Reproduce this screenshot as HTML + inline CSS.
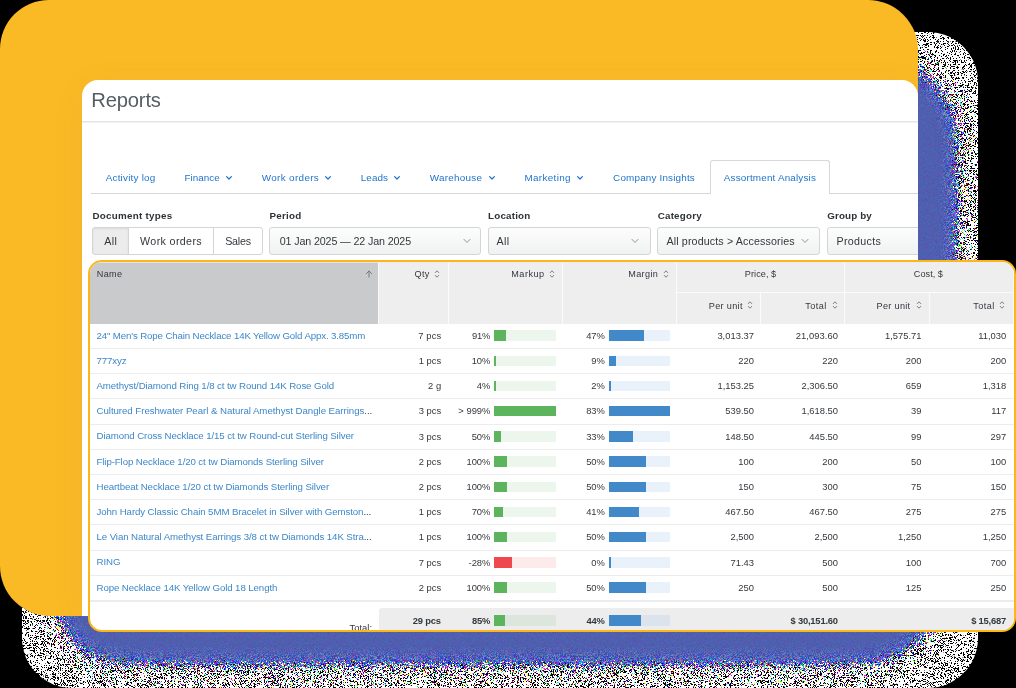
<!DOCTYPE html>
<html><head><meta charset="utf-8"><title>Reports</title>
<style>
html,body{margin:0;padding:0;background:#000;width:1016px;height:688px;overflow:hidden;font-family:"Liberation Sans",sans-serif}
div,span,svg{position:absolute;box-sizing:border-box}
#bg{left:0;top:0}
#yellow{left:0;top:0;width:918px;height:616px;background:#FABA25;border-radius:49px 50px 0 50px}
#white{box-shadow:0 6px 36px rgba(70,90,170,.05);left:82px;top:80px;width:836px;height:536px;background:#fff;border-radius:16px 16px 0 0;overflow:hidden;will-change:transform}
#tcard{left:88px;top:260px;width:928px;height:372px;border:2px solid #FDB714;border-radius:14px;background:#fff;overflow:hidden;will-change:transform}
.t{white-space:nowrap;line-height:20px;height:20px}
.t i{font-style:normal;color:#33383d}
.t b{font-weight:inherit;white-space:nowrap}
.ic{overflow:visible}
.hr{left:0;width:836px;height:1px}
.sel{top:147.1px;height:28.2px;border:1px solid #d3d5d6;border-radius:3px;background:linear-gradient(#fdfdfd,#f0f1f1)}
.bg{top:147.1px;height:28.2px;border:1px solid #d3d5d6;background:#fff}
.hd{background:#eeeeee}
.sep{left:0;width:924px;height:1px;background:#ececec}
.bar{height:10.6px}
</style></head><body>
<svg id="bg" width="1016" height="688" viewBox="0 0 1016 688">
<defs>
<filter id="fbw" x="0" y="0" width="100%" height="100%" color-interpolation-filters="sRGB">
<feTurbulence type="fractalNoise" baseFrequency="2.3" numOctaves="1" seed="7" result="n"/>
<feColorMatrix in="n" type="matrix" values="0 0 0 0 0 0 0 0 0 0 0 0 0 0 0 -60 0 0 0 26.9" result="th"/>
<feFlood flood-color="#000"/><feComposite in2="th" operator="in" result="blk"/>
<feComposite in="blk" in2="SourceGraphic" operator="atop"/>
</filter>
<filter id="fbl" filterUnits="userSpaceOnUse" x="0" y="0" width="1016" height="688" color-interpolation-filters="sRGB">
<feGaussianBlur in="SourceAlpha" stdDeviation="7" result="bl"/>
<feGaussianBlur in="SourceAlpha" stdDeviation="14" result="bl2"/>
<feTurbulence type="fractalNoise" baseFrequency="3.1" numOctaves="1" seed="23" result="n2"/>
<feTurbulence type="fractalNoise" baseFrequency="2.7" numOctaves="1" seed="51" result="n3"/>
<feColorMatrix in="n2" type="matrix" values="0 0 0 0 0 0 0 0 0 0 0 0 0 0 0 0 3 0 0 -1" result="na"/>
<feComposite in="bl" in2="na" operator="arithmetic" k1="0" k2="1.6" k3="1" k4="-1.3" result="sum"/>
<feColorMatrix in="sum" type="matrix" values="0 0 0 0 0 0 0 0 0 0 0 0 0 0 0 0 0 0 400 0" result="mask"/>
<feColorMatrix in="n2" type="matrix" values="0.3 0 0 0 0.165  -0.25 0 0.1 0 0.45  0 0 0.2 0 0.59  0 0 0 0 1" result="flat"/>
<feColorMatrix in="n3" type="matrix" values="3 0 0 0 -1.17 0 3 0 0 -1.11 0 0 3 0 -0.78 0 0 0 0 1" result="c3"/>
<feComponentTransfer in="c3" result="q3"><feFuncR type="discrete" tableValues="0.08 0.5 0.9"/><feFuncG type="discrete" tableValues="0.1 0.5 0.9"/><feFuncB type="discrete" tableValues="0.3 0.55 1"/></feComponentTransfer>
<feColorMatrix in="bl2" type="matrix" values="0 0 0 0 0 0 0 0 0 0 0 0 0 0 0 0 0 0 -1.9 1.8" result="w"/>
<feComposite in="q3" in2="w" operator="in" result="q3w"/>
<feMerge result="colmix"><feMergeNode in="flat"/><feMergeNode in="q3w"/></feMerge>
<feComposite in="colmix" in2="mask" operator="in" result="blue"/>
<feColorMatrix in="n3" type="matrix" values="0 0 0 0 0 0 0 0 0 0 0 0 0 0 0 0 0 0 3 -1" result="n3a"/>
<feComposite in="bl2" in2="n3a" operator="arithmetic" k1="0" k2="1" k3="1" k4="-1.05" result="ss"/>
<feColorMatrix in="ss" type="matrix" values="0 0 0 0 0 0 0 0 0 0 0 0 0 0 0 0 0 0 400 0" result="smask"/>
<feColorMatrix in="n3" type="matrix" values="1 0 0 0 0 0 1 0 0 0 0 0 1 0 0 0 0 0 0 1" result="n3o"/>
<feComponentTransfer in="n3o" result="prim"><feFuncR type="discrete" tableValues="0 1"/><feFuncG type="discrete" tableValues="0 1"/><feFuncB type="discrete" tableValues="0 1"/></feComponentTransfer>
<feComposite in="prim" in2="smask" operator="in" result="speck"/>
<feMerge><feMergeNode in="speck"/><feMergeNode in="blue"/></feMerge>
</filter>
<clipPath id="cp"><rect x="22" y="32" width="956" height="656" rx="50" ry="50"/></clipPath>
</defs>
<rect x="22" y="32" width="956" height="656" rx="50" ry="50" fill="#fff" filter="url(#fbw)"/>
<g clip-path="url(#cp)"><g filter="url(#fbl)"><path d="M70.0 58.0 L500.0 54.0 L880.0 56.0 L905.0 60.0 L918.0 67.0 L933.0 82.0 L946.0 98.0 L954.0 112.0 L957.5 128.0 L958.0 150.0 L958.0 200.0 L957.5 240.0 L957.5 560.0 L955.0 595.0 L948.0 612.0 L939.0 623.0 L927.3 632.0 L915.0 645.6 L901.0 655.0 L887.0 660.7 L866.7 664.0 L846.0 665.5 L700.0 665.8 L400.0 665.8 L200.0 666.3 L140.0 664.7 L110.0 662.7 L97.2 659.2 L85.6 654.5 L75.1 645.2 L68.1 634.7 L58.8 619.6 L52.0 600.0 L50.0 560.0 L50.0 100.0 Z" fill="#000"/></g></g>
</svg>
<div id="yellow"></div>
<div id="white">
<div class="hr" style="top:41px;background:#e3e5e6"></div><div class="hr" style="top:42px;background:#f1f2f2"></div>
<div class="hr" style="left:9px;top:113px;background:#d5d7d8"></div>
<div style="left:627.6px;top:80.4px;width:120px;height:34px;border:1px solid #d5d7d8;border-bottom:none;border-radius:3px 3px 0 0;background:#fff"></div>
<svg class="ic" style="left:142.00px;top:93.50px" width="10" height="8" viewBox="0 0 10 8"><path d="M2.6 2.6 L5 5.0 L7.4 2.6" fill="none" stroke="#1f74ca" stroke-width="1.25" stroke-linecap="round" stroke-linejoin="round"/></svg><svg class="ic" style="left:241.30px;top:93.50px" width="10" height="8" viewBox="0 0 10 8"><path d="M2.6 2.6 L5 5.0 L7.4 2.6" fill="none" stroke="#1f74ca" stroke-width="1.25" stroke-linecap="round" stroke-linejoin="round"/></svg><svg class="ic" style="left:309.90px;top:93.50px" width="10" height="8" viewBox="0 0 10 8"><path d="M2.6 2.6 L5 5.0 L7.4 2.6" fill="none" stroke="#1f74ca" stroke-width="1.25" stroke-linecap="round" stroke-linejoin="round"/></svg><svg class="ic" style="left:404.60px;top:93.50px" width="10" height="8" viewBox="0 0 10 8"><path d="M2.6 2.6 L5 5.0 L7.4 2.6" fill="none" stroke="#1f74ca" stroke-width="1.25" stroke-linecap="round" stroke-linejoin="round"/></svg><svg class="ic" style="left:493.30px;top:93.50px" width="10" height="8" viewBox="0 0 10 8"><path d="M2.6 2.6 L5 5.0 L7.4 2.6" fill="none" stroke="#1f74ca" stroke-width="1.25" stroke-linecap="round" stroke-linejoin="round"/></svg><div class="bg" style="left:10.3px;width:36.7px;border-radius:3px 0 0 3px;background:#ececec;box-shadow:inset 0 1px 2px rgba(0,0,0,.08)"></div><div class="bg" style="left:46px;width:85.8px;border-left:1px solid #d3d5d6"></div><div class="bg" style="left:130.8px;width:49.8px;border-radius:0 3px 3px 0"></div>
<div class="sel" style="left:187.3px;width:211.5px"></div><svg class="ic" style="left:380.30px;top:156.90px" width="10" height="8" viewBox="0 0 10 8"><path d="M2.0 2.4 L5 5.4 L8.0 2.4" fill="none" stroke="#898c8f" stroke-width="0.95" stroke-linecap="round" stroke-linejoin="round"/></svg><div class="sel" style="left:405.8px;width:162.9px"></div><svg class="ic" style="left:548.30px;top:156.90px" width="10" height="8" viewBox="0 0 10 8"><path d="M2.0 2.4 L5 5.4 L8.0 2.4" fill="none" stroke="#898c8f" stroke-width="0.95" stroke-linecap="round" stroke-linejoin="round"/></svg><div class="sel" style="left:575.4px;width:163.0px"></div><svg class="ic" style="left:718.20px;top:156.90px" width="10" height="8" viewBox="0 0 10 8"><path d="M2.0 2.4 L5 5.4 L8.0 2.4" fill="none" stroke="#898c8f" stroke-width="0.95" stroke-linecap="round" stroke-linejoin="round"/></svg><div class="sel" style="left:745.0px;width:133.0px"></div>
<span class="t" id="title" style="top:9.70px;font-size:20.20px;color:#555e65;letter-spacing:-0.181px;left:9.30px;">Reports</span>
<span class="t" id="tab0" style="top:87.77px;font-size:9.90px;color:#1f74ca;letter-spacing:0.216px;left:23.70px;">Activity log</span>
<span class="t" id="tab1" style="top:87.77px;font-size:9.90px;color:#1f74ca;letter-spacing:0.036px;left:102.40px;">Finance</span>
<span class="t" id="tab2" style="top:87.77px;font-size:9.90px;color:#1f74ca;letter-spacing:0.353px;left:179.70px;">Work orders</span>
<span class="t" id="tab3" style="top:87.77px;font-size:9.90px;color:#1f74ca;letter-spacing:0.077px;left:278.80px;">Leads</span>
<span class="t" id="tab4" style="top:87.77px;font-size:9.90px;color:#1f74ca;letter-spacing:0.261px;left:347.70px;">Warehouse</span>
<span class="t" id="tab5" style="top:87.77px;font-size:9.90px;color:#1f74ca;letter-spacing:0.348px;left:442.40px;">Marketing</span>
<span class="t" id="tab6" style="top:87.77px;font-size:9.90px;color:#1f74ca;letter-spacing:0.178px;left:531.10px;">Company Insights</span>
<span class="t" id="tab7" style="top:87.77px;font-size:9.90px;color:#1f74ca;letter-spacing:0.177px;left:641.80px;">Assortment Analysis</span>
<span class="t" id="lab0" style="top:126.40px;font-size:9.80px;color:#2d3236;font-weight:700;letter-spacing:0.269px;left:10.50px;">Document types</span>
<span class="t" id="lab1" style="top:126.40px;font-size:9.80px;color:#2d3236;font-weight:700;letter-spacing:0.264px;left:187.40px;">Period</span>
<span class="t" id="lab2" style="top:126.40px;font-size:9.80px;color:#2d3236;font-weight:700;letter-spacing:0.207px;left:406.00px;">Location</span>
<span class="t" id="lab3" style="top:126.40px;font-size:9.80px;color:#2d3236;font-weight:700;letter-spacing:0.214px;left:575.70px;">Category</span>
<span class="t" id="lab4" style="top:126.40px;font-size:9.80px;color:#2d3236;font-weight:700;letter-spacing:0.142px;left:745.20px;">Group by</span>
<span class="t" id="b0" style="top:150.79px;font-size:10.70px;color:#33383d;letter-spacing:0.291px;left:22.30px;">All</span>
<span class="t" id="b1" style="top:150.79px;font-size:10.70px;color:#33383d;letter-spacing:0.359px;left:58.10px;">Work orders</span>
<span class="t" id="b2" style="top:150.79px;font-size:10.70px;color:#33383d;letter-spacing:-0.197px;left:143.20px;">Sales</span>
<span class="t" id="s0" style="top:150.79px;font-size:10.70px;color:#33383d;letter-spacing:-0.125px;left:197.80px;">01 Jan 2025 — 22 Jan 2025</span>
<span class="t" id="s1" style="top:150.79px;font-size:10.70px;color:#33383d;letter-spacing:0.357px;left:414.50px;">All</span>
<span class="t" id="s2" style="top:150.79px;font-size:10.70px;color:#33383d;letter-spacing:0.124px;left:584.50px;">All products &gt; Accessories</span>
<span class="t" id="s3" style="top:150.79px;font-size:10.70px;color:#33383d;letter-spacing:0.284px;left:754.60px;">Products</span>
</div>
<div id="tcard">
<div style="left:0.0px;top:0.0px;width:924.0px;height:61.7px;background:#eeeeee;"></div><div style="left:0.0px;top:0.0px;width:288.4px;height:61.7px;background:#c9cacc;"></div><div style="left:288.4px;top:0.0px;width:1.0px;height:61.7px;background:#fbfbfb;"></div><div style="left:357.6px;top:0.0px;width:1.0px;height:61.7px;background:#fbfbfb;"></div><div style="left:472.1px;top:0.0px;width:1.0px;height:61.7px;background:#fbfbfb;"></div><div style="left:586.3px;top:0.0px;width:1.0px;height:61.7px;background:#fbfbfb;"></div><div style="left:754.4px;top:0.0px;width:1.0px;height:61.7px;background:#fbfbfb;"></div><div style="left:670.3px;top:30.3px;width:1.0px;height:31.4px;background:#fbfbfb;"></div><div style="left:838.5px;top:30.3px;width:1.0px;height:31.4px;background:#fbfbfb;"></div><div style="left:586.3px;top:29.8px;width:337.7px;height:1.0px;background:#fbfbfb;"></div><div style="left:0.0px;top:0.0px;width:924.0px;height:1.0px;background:rgba(228,236,252,.75);"></div><div style="left:922.6px;top:0.0px;width:1.4px;height:61.7px;background:#f9f9fb;"></div>
<svg class="ic" style="left:273.50px;top:6.90px" width="10" height="10" viewBox="0 0 10 10"><path d="M5 8.2 L5 2.0 M2.3 4.7 L5 2.0 L7.7 4.7" fill="none" stroke="#6f7376" stroke-width="0.9" stroke-linecap="round" stroke-linejoin="round"/></svg><svg class="ic" style="left:343.40px;top:6.60px" width="8" height="10" viewBox="0 0 8 10"><path d="M2.3 3.6 L4 1.8 L5.7 3.6 M2.3 6.4 L4 8.2 L5.7 6.4" fill="none" stroke="#66696c" stroke-width="0.85" stroke-linecap="round" stroke-linejoin="round"/></svg><svg class="ic" style="left:457.80px;top:6.60px" width="8" height="10" viewBox="0 0 8 10"><path d="M2.3 3.6 L4 1.8 L5.7 3.6 M2.3 6.4 L4 8.2 L5.7 6.4" fill="none" stroke="#66696c" stroke-width="0.85" stroke-linecap="round" stroke-linejoin="round"/></svg><svg class="ic" style="left:571.90px;top:6.60px" width="8" height="10" viewBox="0 0 8 10"><path d="M2.3 3.6 L4 1.8 L5.7 3.6 M2.3 6.4 L4 8.2 L5.7 6.4" fill="none" stroke="#66696c" stroke-width="0.85" stroke-linecap="round" stroke-linejoin="round"/></svg><svg class="ic" style="left:656.40px;top:38.40px" width="8" height="10" viewBox="0 0 8 10"><path d="M2.3 3.6 L4 1.8 L5.7 3.6 M2.3 6.4 L4 8.2 L5.7 6.4" fill="none" stroke="#66696c" stroke-width="0.85" stroke-linecap="round" stroke-linejoin="round"/></svg><svg class="ic" style="left:740.50px;top:38.40px" width="8" height="10" viewBox="0 0 8 10"><path d="M2.3 3.6 L4 1.8 L5.7 3.6 M2.3 6.4 L4 8.2 L5.7 6.4" fill="none" stroke="#66696c" stroke-width="0.85" stroke-linecap="round" stroke-linejoin="round"/></svg><svg class="ic" style="left:824.60px;top:38.40px" width="8" height="10" viewBox="0 0 8 10"><path d="M2.3 3.6 L4 1.8 L5.7 3.6 M2.3 6.4 L4 8.2 L5.7 6.4" fill="none" stroke="#66696c" stroke-width="0.85" stroke-linecap="round" stroke-linejoin="round"/></svg><svg class="ic" style="left:908.40px;top:38.40px" width="8" height="10" viewBox="0 0 8 10"><path d="M2.3 3.6 L4 1.8 L5.7 3.6 M2.3 6.4 L4 8.2 L5.7 6.4" fill="none" stroke="#66696c" stroke-width="0.85" stroke-linecap="round" stroke-linejoin="round"/></svg>
<div style="left:0.0px;top:86.0px;width:924.0px;height:1.0px;background:#ececec;"></div><div style="left:0.0px;top:111.2px;width:924.0px;height:1.0px;background:#ececec;"></div><div style="left:0.0px;top:136.4px;width:924.0px;height:1.0px;background:#ececec;"></div><div style="left:0.0px;top:161.6px;width:924.0px;height:1.0px;background:#ececec;"></div><div style="left:0.0px;top:186.8px;width:924.0px;height:1.0px;background:#ececec;"></div><div style="left:0.0px;top:212.0px;width:924.0px;height:1.0px;background:#ececec;"></div><div style="left:0.0px;top:237.2px;width:924.0px;height:1.0px;background:#ececec;"></div><div style="left:0.0px;top:262.4px;width:924.0px;height:1.0px;background:#ececec;"></div><div style="left:0.0px;top:287.6px;width:924.0px;height:1.0px;background:#ececec;"></div><div style="left:0.0px;top:312.8px;width:924.0px;height:1.0px;background:#ececec;"></div><div style="left:0.0px;top:338.0px;width:924.0px;height:1.5px;background:#ececec;"></div><div style="left:289.2px;top:346.0px;width:634.8px;height:23.0px;background:#ededed;border-radius:3px 0 0 0;"></div>
<div style="left:404.4px;top:68.3px;width:61.5px;height:10.6px;background:#edf6ed;"></div><div style="left:404.4px;top:68.3px;width:11.8px;height:10.6px;background:#5cb55c;"></div><div style="left:519.0px;top:68.3px;width:61.1px;height:10.6px;background:#e9f1fa;"></div><div style="left:519.0px;top:68.3px;width:34.5px;height:10.6px;background:#4189c9;"></div>
<div style="left:404.4px;top:93.5px;width:61.5px;height:10.6px;background:#edf6ed;"></div><div style="left:404.4px;top:93.5px;width:1.7px;height:10.6px;background:#5cb55c;"></div><div style="left:519.0px;top:93.5px;width:61.1px;height:10.6px;background:#e9f1fa;"></div><div style="left:519.0px;top:93.5px;width:6.6px;height:10.6px;background:#4189c9;"></div>
<div style="left:404.4px;top:118.7px;width:61.5px;height:10.6px;background:#edf6ed;"></div><div style="left:404.4px;top:118.7px;width:1.5px;height:10.6px;background:#5cb55c;"></div><div style="left:519.0px;top:118.7px;width:61.1px;height:10.6px;background:#e9f1fa;"></div><div style="left:519.0px;top:118.7px;width:1.7px;height:10.6px;background:#4189c9;"></div>
<div style="left:404.4px;top:143.9px;width:61.5px;height:10.6px;background:#edf6ed;"></div><div style="left:404.4px;top:143.9px;width:61.5px;height:10.6px;background:#5cb55c;"></div><div style="left:519.0px;top:143.9px;width:61.1px;height:10.6px;background:#e9f1fa;"></div><div style="left:519.0px;top:143.9px;width:61.0px;height:10.6px;background:#4189c9;"></div>
<div style="left:404.4px;top:169.1px;width:61.5px;height:10.6px;background:#edf6ed;"></div><div style="left:404.4px;top:169.1px;width:6.6px;height:10.6px;background:#5cb55c;"></div><div style="left:519.0px;top:169.1px;width:61.1px;height:10.6px;background:#e9f1fa;"></div><div style="left:519.0px;top:169.1px;width:24.3px;height:10.6px;background:#4189c9;"></div>
<div style="left:404.4px;top:194.3px;width:61.5px;height:10.6px;background:#edf6ed;"></div><div style="left:404.4px;top:194.3px;width:12.5px;height:10.6px;background:#5cb55c;"></div><div style="left:519.0px;top:194.3px;width:61.1px;height:10.6px;background:#e9f1fa;"></div><div style="left:519.0px;top:194.3px;width:36.7px;height:10.6px;background:#4189c9;"></div>
<div style="left:404.4px;top:219.5px;width:61.5px;height:10.6px;background:#edf6ed;"></div><div style="left:404.4px;top:219.5px;width:12.5px;height:10.6px;background:#5cb55c;"></div><div style="left:519.0px;top:219.5px;width:61.1px;height:10.6px;background:#e9f1fa;"></div><div style="left:519.0px;top:219.5px;width:36.7px;height:10.6px;background:#4189c9;"></div>
<div style="left:404.4px;top:244.7px;width:61.5px;height:10.6px;background:#edf6ed;"></div><div style="left:404.4px;top:244.7px;width:8.6px;height:10.6px;background:#5cb55c;"></div><div style="left:519.0px;top:244.7px;width:61.1px;height:10.6px;background:#e9f1fa;"></div><div style="left:519.0px;top:244.7px;width:30.1px;height:10.6px;background:#4189c9;"></div>
<div style="left:404.4px;top:269.9px;width:61.5px;height:10.6px;background:#edf6ed;"></div><div style="left:404.4px;top:269.9px;width:12.5px;height:10.6px;background:#5cb55c;"></div><div style="left:519.0px;top:269.9px;width:61.1px;height:10.6px;background:#e9f1fa;"></div><div style="left:519.0px;top:269.9px;width:36.7px;height:10.6px;background:#4189c9;"></div>
<div style="left:404.4px;top:295.1px;width:61.5px;height:10.6px;background:#fdebeb;"></div><div style="left:404.4px;top:295.1px;width:17.2px;height:10.6px;background:#f0484f;"></div><div style="left:519.0px;top:295.1px;width:61.1px;height:10.6px;background:#e9f1fa;"></div><div style="left:519.0px;top:295.1px;width:1.7px;height:10.6px;background:#4189c9;"></div>
<div style="left:404.4px;top:320.3px;width:61.5px;height:10.6px;background:#edf6ed;"></div><div style="left:404.4px;top:320.3px;width:12.5px;height:10.6px;background:#5cb55c;"></div><div style="left:519.0px;top:320.3px;width:61.1px;height:10.6px;background:#e9f1fa;"></div><div style="left:519.0px;top:320.3px;width:36.7px;height:10.6px;background:#4189c9;"></div>
<div style="left:404.4px;top:353.0px;width:61.5px;height:10.6px;background:#dde6dd;"></div><div style="left:404.4px;top:353.0px;width:10.8px;height:10.6px;background:#5cb55c;"></div><div style="left:519.0px;top:353.0px;width:61.1px;height:10.6px;background:#dce3ec;"></div><div style="left:519.0px;top:353.0px;width:32.0px;height:10.6px;background:#4189c9;"></div>
<span class="t" id="hName" style="top:2.45px;font-size:9.10px;color:#33383d;letter-spacing:0.388px;left:6.70px;">Name</span>
<span class="t" id="hQty" style="top:2.45px;font-size:9.10px;color:#33383d;letter-spacing:0.421px;right:584.18px;">Qty</span>
<span class="t" id="hMarkup" style="top:2.45px;font-size:9.10px;color:#33383d;letter-spacing:0.498px;right:469.40px;">Markup</span>
<span class="t" id="hMargin" style="top:2.45px;font-size:9.10px;color:#33383d;letter-spacing:0.370px;right:355.73px;">Margin</span>
<span class="t" id="hPrice" style="top:2.45px;font-size:9.10px;color:#33383d;letter-spacing:0.072px;left:670.54px;width:0;display:flex;justify-content:center;"><b>Price, $</b></span>
<span class="t" id="hCost" style="top:2.45px;font-size:9.10px;color:#33383d;letter-spacing:0.044px;left:838.42px;width:0;display:flex;justify-content:center;"><b>Cost, $</b></span>
<span class="t" id="hPU1" style="top:33.85px;font-size:9.10px;color:#33383d;letter-spacing:0.347px;right:271.15px;">Per unit</span>
<span class="t" id="hT1" style="top:33.85px;font-size:9.10px;color:#33383d;letter-spacing:0.460px;right:187.24px;">Total</span>
<span class="t" id="hPU2" style="top:33.85px;font-size:9.10px;color:#33383d;letter-spacing:0.309px;right:103.59px;">Per unit</span>
<span class="t" id="hT2" style="top:33.85px;font-size:9.10px;color:#33383d;letter-spacing:0.460px;right:19.34px;">Total</span>
<span class="t" id="n0" style="top:63.64px;font-size:9.70px;color:#3d87c9;letter-spacing:-0.138px;left:6.50px;">24" Men's Rope Chain Necklace 14K Yellow Gold Appx. 3.85mm</span>
<span class="t" id="q0" style="top:63.74px;font-size:9.40px;color:#33383d;letter-spacing:0.105px;right:572.79px;">7 pcs</span>
<span class="t" id="mu0" style="top:63.74px;font-size:9.40px;color:#33383d;letter-spacing:-0.173px;right:523.77px;">91%</span>
<span class="t" id="mg0" style="top:63.74px;font-size:9.40px;color:#33383d;letter-spacing:0.008px;right:409.09px;">47%</span>
<span class="t" id="v0_0" style="top:63.74px;font-size:9.40px;color:#33383d;letter-spacing:0.018px;right:259.98px;">3,013.37</span>
<span class="t" id="v0_1" style="top:63.74px;font-size:9.40px;color:#33383d;letter-spacing:0.081px;right:175.92px;">21,093.60</span>
<span class="t" id="v0_2" style="top:63.74px;font-size:9.40px;color:#33383d;letter-spacing:0.008px;right:92.49px;">1,575.71</span>
<span class="t" id="v0_3" style="top:63.74px;font-size:9.40px;color:#33383d;letter-spacing:0.008px;right:7.79px;">11,030</span>
<span class="t" id="n1" style="top:88.84px;font-size:9.70px;color:#3d87c9;letter-spacing:-0.105px;left:6.50px;">777xyz</span>
<span class="t" id="q1" style="top:88.94px;font-size:9.40px;color:#33383d;letter-spacing:0.008px;right:572.89px;">1 pcs</span>
<span class="t" id="mu1" style="top:88.94px;font-size:9.40px;color:#33383d;letter-spacing:0.008px;right:523.59px;">10%</span>
<span class="t" id="mg1" style="top:88.94px;font-size:9.40px;color:#33383d;letter-spacing:0.008px;right:409.09px;">9%</span>
<span class="t" id="v1_0" style="top:88.94px;font-size:9.40px;color:#33383d;letter-spacing:0.008px;right:259.99px;">220</span>
<span class="t" id="v1_1" style="top:88.94px;font-size:9.40px;color:#33383d;letter-spacing:0.008px;right:175.99px;">220</span>
<span class="t" id="v1_2" style="top:88.94px;font-size:9.40px;color:#33383d;letter-spacing:0.008px;right:92.49px;">200</span>
<span class="t" id="v1_3" style="top:88.94px;font-size:9.40px;color:#33383d;letter-spacing:0.008px;right:7.79px;">200</span>
<span class="t" id="n2" style="top:114.04px;font-size:9.70px;color:#3d87c9;letter-spacing:-0.104px;left:6.50px;">Amethyst/Diamond Ring 1/8 ct tw Round 14K Rose Gold</span>
<span class="t" id="q2" style="top:114.14px;font-size:9.40px;color:#33383d;letter-spacing:0.008px;right:572.89px;">2 g</span>
<span class="t" id="mu2" style="top:114.14px;font-size:9.40px;color:#33383d;letter-spacing:0.008px;right:523.59px;">4%</span>
<span class="t" id="mg2" style="top:114.14px;font-size:9.40px;color:#33383d;letter-spacing:0.008px;right:409.09px;">2%</span>
<span class="t" id="v2_0" style="top:114.14px;font-size:9.40px;color:#33383d;letter-spacing:0.008px;right:259.99px;">1,153.25</span>
<span class="t" id="v2_1" style="top:114.14px;font-size:9.40px;color:#33383d;letter-spacing:0.008px;right:175.99px;">2,306.50</span>
<span class="t" id="v2_2" style="top:114.14px;font-size:9.40px;color:#33383d;letter-spacing:0.008px;right:92.49px;">659</span>
<span class="t" id="v2_3" style="top:114.14px;font-size:9.40px;color:#33383d;letter-spacing:0.008px;right:7.79px;">1,318</span>
<span class="t" id="n3" style="top:139.24px;font-size:9.70px;color:#3d87c9;letter-spacing:-0.051px;left:6.50px;">Cultured Freshwater Pearl &amp; Natural Amethyst Dangle Earrings<i>...</i></span>
<span class="t" id="q3" style="top:139.34px;font-size:9.40px;color:#33383d;letter-spacing:0.008px;right:572.89px;">3 pcs</span>
<span class="t" id="mu3" style="top:139.34px;font-size:9.40px;color:#33383d;letter-spacing:0.008px;right:523.59px;">&gt; 999%</span>
<span class="t" id="mg3" style="top:139.34px;font-size:9.40px;color:#33383d;letter-spacing:0.008px;right:409.09px;">83%</span>
<span class="t" id="v3_0" style="top:139.34px;font-size:9.40px;color:#33383d;letter-spacing:0.008px;right:259.99px;">539.50</span>
<span class="t" id="v3_1" style="top:139.34px;font-size:9.40px;color:#33383d;letter-spacing:0.008px;right:175.99px;">1,618.50</span>
<span class="t" id="v3_2" style="top:139.34px;font-size:9.40px;color:#33383d;letter-spacing:0.008px;right:92.49px;">39</span>
<span class="t" id="v3_3" style="top:139.34px;font-size:9.40px;color:#33383d;letter-spacing:0.008px;right:7.79px;">117</span>
<span class="t" id="n4" style="top:164.44px;font-size:9.70px;color:#3d87c9;letter-spacing:-0.100px;left:6.50px;">Diamond Cross Necklace 1/15 ct tw Round-cut Sterling Silver</span>
<span class="t" id="q4" style="top:164.54px;font-size:9.40px;color:#33383d;letter-spacing:0.008px;right:572.89px;">3 pcs</span>
<span class="t" id="mu4" style="top:164.54px;font-size:9.40px;color:#33383d;letter-spacing:0.008px;right:523.59px;">50%</span>
<span class="t" id="mg4" style="top:164.54px;font-size:9.40px;color:#33383d;letter-spacing:0.008px;right:409.09px;">33%</span>
<span class="t" id="v4_0" style="top:164.54px;font-size:9.40px;color:#33383d;letter-spacing:0.008px;right:259.99px;">148.50</span>
<span class="t" id="v4_1" style="top:164.54px;font-size:9.40px;color:#33383d;letter-spacing:0.008px;right:175.99px;">445.50</span>
<span class="t" id="v4_2" style="top:164.54px;font-size:9.40px;color:#33383d;letter-spacing:0.008px;right:92.49px;">99</span>
<span class="t" id="v4_3" style="top:164.54px;font-size:9.40px;color:#33383d;letter-spacing:0.008px;right:7.79px;">297</span>
<span class="t" id="n5" style="top:189.64px;font-size:9.70px;color:#3d87c9;letter-spacing:-0.108px;left:6.50px;">Flip-Flop Necklace 1/20 ct tw Diamonds Sterling Silver</span>
<span class="t" id="q5" style="top:189.74px;font-size:9.40px;color:#33383d;letter-spacing:0.008px;right:572.89px;">2 pcs</span>
<span class="t" id="mu5" style="top:189.74px;font-size:9.40px;color:#33383d;letter-spacing:0.008px;right:523.59px;">100%</span>
<span class="t" id="mg5" style="top:189.74px;font-size:9.40px;color:#33383d;letter-spacing:0.008px;right:409.09px;">50%</span>
<span class="t" id="v5_0" style="top:189.74px;font-size:9.40px;color:#33383d;letter-spacing:0.008px;right:259.99px;">100</span>
<span class="t" id="v5_1" style="top:189.74px;font-size:9.40px;color:#33383d;letter-spacing:0.008px;right:175.99px;">200</span>
<span class="t" id="v5_2" style="top:189.74px;font-size:9.40px;color:#33383d;letter-spacing:0.008px;right:92.49px;">50</span>
<span class="t" id="v5_3" style="top:189.74px;font-size:9.40px;color:#33383d;letter-spacing:0.008px;right:7.79px;">100</span>
<span class="t" id="n6" style="top:214.84px;font-size:9.70px;color:#3d87c9;letter-spacing:-0.101px;left:6.50px;">Heartbeat Necklace 1/20 ct tw Diamonds Sterling Silver</span>
<span class="t" id="q6" style="top:214.94px;font-size:9.40px;color:#33383d;letter-spacing:0.008px;right:572.89px;">2 pcs</span>
<span class="t" id="mu6" style="top:214.94px;font-size:9.40px;color:#33383d;letter-spacing:0.008px;right:523.59px;">100%</span>
<span class="t" id="mg6" style="top:214.94px;font-size:9.40px;color:#33383d;letter-spacing:0.008px;right:409.09px;">50%</span>
<span class="t" id="v6_0" style="top:214.94px;font-size:9.40px;color:#33383d;letter-spacing:0.008px;right:259.99px;">150</span>
<span class="t" id="v6_1" style="top:214.94px;font-size:9.40px;color:#33383d;letter-spacing:0.008px;right:175.99px;">300</span>
<span class="t" id="v6_2" style="top:214.94px;font-size:9.40px;color:#33383d;letter-spacing:0.008px;right:92.49px;">75</span>
<span class="t" id="v6_3" style="top:214.94px;font-size:9.40px;color:#33383d;letter-spacing:0.008px;right:7.79px;">150</span>
<span class="t" id="n7" style="top:240.04px;font-size:9.70px;color:#3d87c9;letter-spacing:-0.101px;left:6.50px;">John Hardy Classic Chain 5MM Bracelet in Silver with Gemston<i>...</i></span>
<span class="t" id="q7" style="top:240.14px;font-size:9.40px;color:#33383d;letter-spacing:0.008px;right:572.89px;">1 pcs</span>
<span class="t" id="mu7" style="top:240.14px;font-size:9.40px;color:#33383d;letter-spacing:0.008px;right:523.59px;">70%</span>
<span class="t" id="mg7" style="top:240.14px;font-size:9.40px;color:#33383d;letter-spacing:0.008px;right:409.09px;">41%</span>
<span class="t" id="v7_0" style="top:240.14px;font-size:9.40px;color:#33383d;letter-spacing:0.008px;right:259.99px;">467.50</span>
<span class="t" id="v7_1" style="top:240.14px;font-size:9.40px;color:#33383d;letter-spacing:0.008px;right:175.99px;">467.50</span>
<span class="t" id="v7_2" style="top:240.14px;font-size:9.40px;color:#33383d;letter-spacing:0.008px;right:92.49px;">275</span>
<span class="t" id="v7_3" style="top:240.14px;font-size:9.40px;color:#33383d;letter-spacing:0.008px;right:7.79px;">275</span>
<span class="t" id="n8" style="top:265.24px;font-size:9.70px;color:#3d87c9;letter-spacing:-0.101px;left:6.50px;">Le Vian Natural Amethyst Earrings 3/8 ct tw Diamonds 14K Stra<i>...</i></span>
<span class="t" id="q8" style="top:265.34px;font-size:9.40px;color:#33383d;letter-spacing:0.008px;right:572.89px;">1 pcs</span>
<span class="t" id="mu8" style="top:265.34px;font-size:9.40px;color:#33383d;letter-spacing:0.008px;right:523.59px;">100%</span>
<span class="t" id="mg8" style="top:265.34px;font-size:9.40px;color:#33383d;letter-spacing:0.008px;right:409.09px;">50%</span>
<span class="t" id="v8_0" style="top:265.34px;font-size:9.40px;color:#33383d;letter-spacing:0.008px;right:259.99px;">2,500</span>
<span class="t" id="v8_1" style="top:265.34px;font-size:9.40px;color:#33383d;letter-spacing:0.008px;right:175.99px;">2,500</span>
<span class="t" id="v8_2" style="top:265.34px;font-size:9.40px;color:#33383d;letter-spacing:0.008px;right:92.49px;">1,250</span>
<span class="t" id="v8_3" style="top:265.34px;font-size:9.40px;color:#33383d;letter-spacing:0.008px;right:7.79px;">1,250</span>
<span class="t" id="n9" style="top:290.44px;font-size:9.70px;color:#3d87c9;letter-spacing:-0.101px;left:6.50px;">RING</span>
<span class="t" id="q9" style="top:290.54px;font-size:9.40px;color:#33383d;letter-spacing:0.008px;right:572.89px;">7 pcs</span>
<span class="t" id="mu9" style="top:290.54px;font-size:9.40px;color:#33383d;letter-spacing:0.008px;right:523.59px;">-28%</span>
<span class="t" id="mg9" style="top:290.54px;font-size:9.40px;color:#33383d;letter-spacing:0.008px;right:409.09px;">0%</span>
<span class="t" id="v9_0" style="top:290.54px;font-size:9.40px;color:#33383d;letter-spacing:0.008px;right:259.99px;">71.43</span>
<span class="t" id="v9_1" style="top:290.54px;font-size:9.40px;color:#33383d;letter-spacing:0.008px;right:175.99px;">500</span>
<span class="t" id="v9_2" style="top:290.54px;font-size:9.40px;color:#33383d;letter-spacing:0.008px;right:92.49px;">100</span>
<span class="t" id="v9_3" style="top:290.54px;font-size:9.40px;color:#33383d;letter-spacing:0.008px;right:7.79px;">700</span>
<span class="t" id="n10" style="top:315.64px;font-size:9.70px;color:#3d87c9;letter-spacing:-0.101px;left:6.50px;">Rope Necklace 14K Yellow Gold 18 Length</span>
<span class="t" id="q10" style="top:315.74px;font-size:9.40px;color:#33383d;letter-spacing:0.008px;right:572.89px;">2 pcs</span>
<span class="t" id="mu10" style="top:315.74px;font-size:9.40px;color:#33383d;letter-spacing:0.008px;right:523.59px;">100%</span>
<span class="t" id="mg10" style="top:315.74px;font-size:9.40px;color:#33383d;letter-spacing:0.008px;right:409.09px;">50%</span>
<span class="t" id="v10_0" style="top:315.74px;font-size:9.40px;color:#33383d;letter-spacing:0.008px;right:259.99px;">250</span>
<span class="t" id="v10_1" style="top:315.74px;font-size:9.40px;color:#33383d;letter-spacing:0.008px;right:175.99px;">500</span>
<span class="t" id="v10_2" style="top:315.74px;font-size:9.40px;color:#33383d;letter-spacing:0.008px;right:92.49px;">125</span>
<span class="t" id="v10_3" style="top:315.74px;font-size:9.40px;color:#33383d;letter-spacing:0.008px;right:7.79px;">250</span>
<span class="t" id="tot" style="top:355.74px;font-size:9.40px;color:#33383d;right:642.00px;">Total:</span>
<span class="t" id="tq" style="top:348.64px;font-size:9.40px;color:#33383d;font-weight:700;letter-spacing:-0.207px;right:573.21px;">29 pcs</span>
<span class="t" id="tmu" style="top:348.64px;font-size:9.40px;color:#33383d;font-weight:700;letter-spacing:-0.207px;right:523.81px;">85%</span>
<span class="t" id="tmg" style="top:348.64px;font-size:9.40px;color:#33383d;font-weight:700;letter-spacing:-0.207px;right:409.31px;">44%</span>
<span class="t" id="tp" style="top:348.64px;font-size:9.40px;color:#33383d;font-weight:700;letter-spacing:-0.207px;right:176.21px;">$ 30,151.60</span>
<span class="t" id="tc" style="top:348.64px;font-size:9.40px;color:#33383d;font-weight:700;letter-spacing:-0.207px;right:8.01px;">$ 15,687</span>
</div>
</body></html>
